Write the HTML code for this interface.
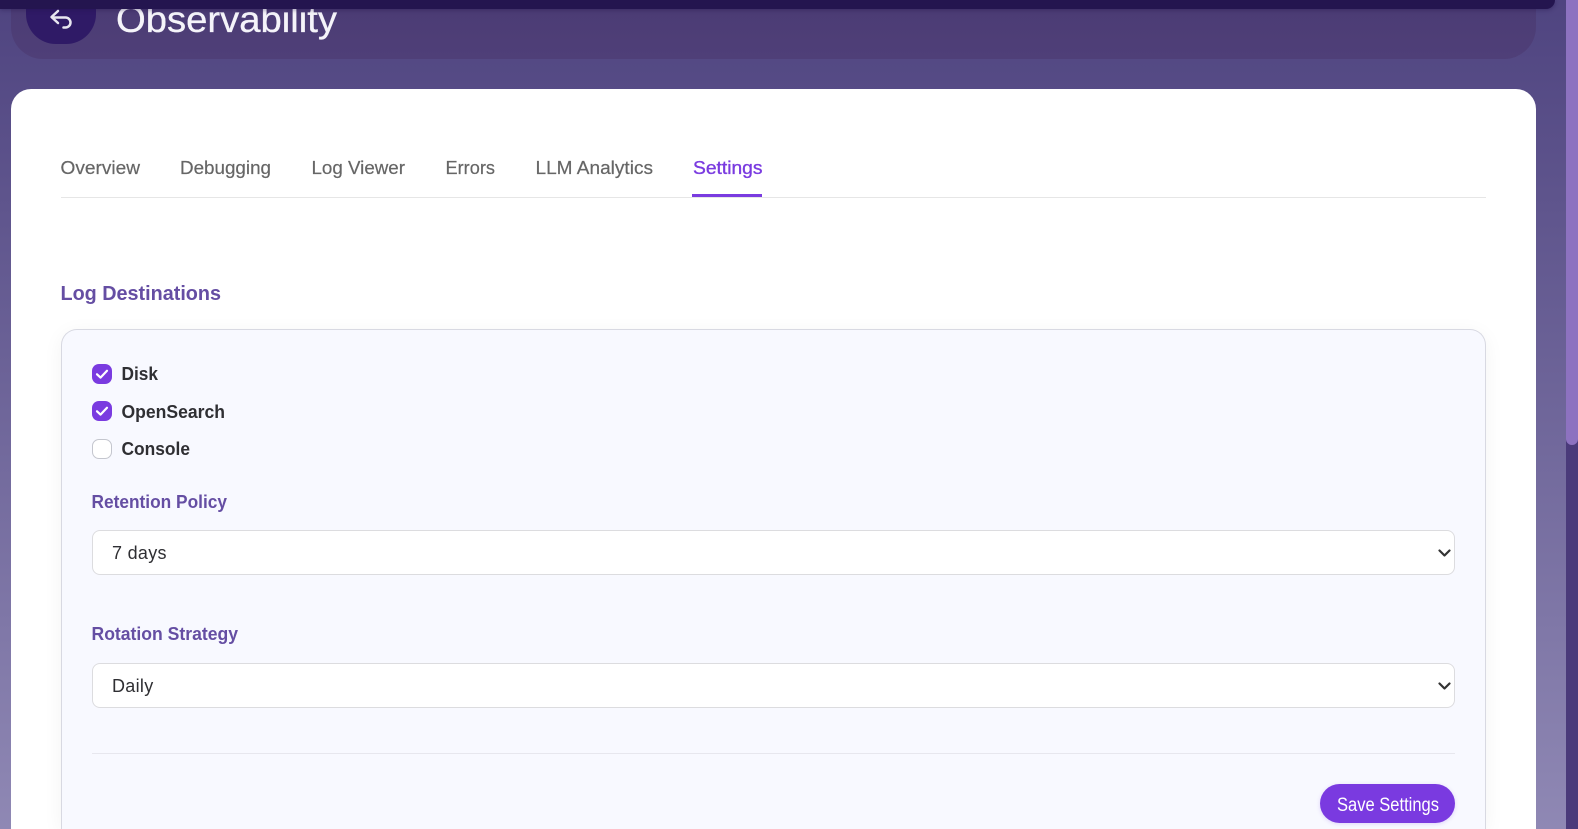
<!DOCTYPE html>
<html lang="en">
<head>
<meta charset="utf-8">
<title>Observability</title>
<style>
html,body{margin:0;padding:0;width:1578px;height:829px;overflow:hidden}
body{font-family:"Liberation Sans",sans-serif}
#page{position:absolute;left:0;top:0;width:1578px;height:829px;overflow:hidden;background:linear-gradient(180deg,#4f4480 0,#8f88b4 829px)}
#page div,#page select,#page svg{position:absolute;box-sizing:border-box}
#top{left:0;top:0;width:1555px;height:9px;background:#24154f;border-radius:0 0 10px 0;box-shadow:0 1px 4px rgba(30,15,70,.4);z-index:3}
#hdr{left:11px;top:-60px;width:1525px;height:119px;border-radius:0 0 32px 32px;background:linear-gradient(180deg,#473870,#4f3f78)}
#back{left:26px;top:-30px;width:70px;height:74px;border-radius:0 0 30px 30px;background:#2f1a66}
#main{left:11px;top:89px;width:1525px;height:740px;background:#fff;border-radius:20px 20px 0 0}
#rule{left:61px;top:197px;width:1425px;height:1px;background:#e6e6e6}
#ul{left:692px;top:194px;width:70px;height:3px;background:#7a3be0}
#card{left:61px;top:329px;width:1425px;height:500px;background:#f8f9ff;border:1px solid #d8d9e2;border-bottom:0;border-radius:16px 16px 0 0;box-shadow:0 4px 20px rgba(0,0,0,.05)}
.cb{left:92px;width:20px;height:20px;border-radius:7px;background:#7a3be0}
.cb.off{background:#fff;border:1px solid #c4c6ce}
select{appearance:none;-webkit-appearance:none;left:92px;width:1363px;height:45px;background:#fff;border:1px solid #dcdcdf;border-radius:8px;padding:0 19px;font:18px "Liberation Sans",sans-serif;color:#2f2f33;letter-spacing:.3px;outline:none}
#div{left:92px;top:753px;width:1363px;height:1px;background:#e7e7ee}
#btn{left:1320px;top:784px;width:135px;height:39px;border-radius:20px;background:#7a3ae0;box-shadow:0 1px 4px rgba(122,58,224,.2)}
#track{left:1566px;top:0;width:12px;height:829px;background:#4a3a7a}
#thumb{left:1566px;top:0;width:12px;height:445px;background:#8d72c0;border-radius:0 0 6px 6px}
#t{left:0;top:0;z-index:4}
#h{left:0;top:0;z-index:1}
#top{z-index:3}
</style>
</head>
<body>
<div id="page">
<div id="hdr"></div>
<div id="back"></div>
<div id="main"></div>
<div id="rule"></div>
<div id="ul"></div>
<div id="card"></div>
<div class="cb" style="top:364px"><svg style="left:0;top:0" width="20" height="20" viewBox="0 0 20 20"><path d="M5 10.300l3.500 3.300 6.500-6.800" fill="none" stroke="#fff" stroke-width="2.200" stroke-linecap="round" stroke-linejoin="round"/></svg></div>
<div class="cb" style="top:401px"><svg style="left:0;top:0" width="20" height="20" viewBox="0 0 20 20"><path d="M5 10.300l3.500 3.300 6.500-6.800" fill="none" stroke="#fff" stroke-width="2.200" stroke-linecap="round" stroke-linejoin="round"/></svg></div>
<div class="cb off" style="top:439px"></div>
<select style="top:530px"><option>7 days</option></select>
<select style="top:663px"><option>Daily</option></select>
<div id="div"></div>
<div id="btn"></div>
<div id="track"></div>
<div id="thumb"></div>
<svg id="h" width="400" height="60" viewBox="0 0 400 60" font-family="'Liberation Sans',sans-serif">
<text x="116" y="32" font-size="37" fill="#f5f4fa" stroke="#f5f4fa" stroke-width=".3" textLength="221" lengthAdjust="spacingAndGlyphs">Observability</text>
</svg>
<div id="top"></div>
<svg id="t" width="1578" height="829" viewBox="0 0 1578 829" font-family="'Liberation Sans',sans-serif">
<path d="M58 11L51.500 17L58 23M52 17.500H65.500a5 5 0 0 1 0 10H63.500" fill="none" stroke="#e8e6f0" stroke-width="2.500" stroke-linecap="round" stroke-linejoin="round"/>
<path d="M1439.500 550.500l5 5 5-5M1439.500 683.500l5 5 5-5" fill="none" stroke="#333" stroke-width="2.200" stroke-linecap="round" stroke-linejoin="round"/>
<g font-size="18.500" fill="#666" stroke="#666" stroke-width=".2">
<text x="60.500" y="174" textLength="79.500" lengthAdjust="spacingAndGlyphs">Overview</text>
<text x="180" y="174" textLength="91" lengthAdjust="spacingAndGlyphs">Debugging</text>
<text x="311.500" y="174" textLength="93.500" lengthAdjust="spacingAndGlyphs">Log Viewer</text>
<text x="445.500" y="174" textLength="49.500" lengthAdjust="spacingAndGlyphs">Errors</text>
<text x="535.500" y="174" textLength="117.500" lengthAdjust="spacingAndGlyphs">LLM Analytics</text>
<text x="693" y="174" textLength="69.500" lengthAdjust="spacingAndGlyphs" fill="#7a3be0" stroke="#7a3be0" stroke-width=".35">Settings</text>
</g>
<text x="60.500" y="300" font-size="20.500" font-weight="700" fill="#654ea3" textLength="160.500" lengthAdjust="spacingAndGlyphs">Log Destinations</text>
<g font-size="18.500" font-weight="700" fill="#2f2f33">
<text x="121.500" y="380" textLength="36.500" lengthAdjust="spacingAndGlyphs">Disk</text>
<text x="121.500" y="418" textLength="103.500" lengthAdjust="spacingAndGlyphs">OpenSearch</text>
<text x="121.500" y="455" textLength="68.500" lengthAdjust="spacingAndGlyphs">Console</text>
</g>
<g font-size="18" font-weight="700" fill="#654ea3">
<text x="91.500" y="508" textLength="135.500" lengthAdjust="spacingAndGlyphs">Retention Policy</text>
<text x="91.500" y="640" textLength="146.500" lengthAdjust="spacingAndGlyphs">Rotation Strategy</text>
</g>
<text x="1337" y="811" font-size="19" fill="#fff" textLength="102" lengthAdjust="spacingAndGlyphs">Save Settings</text>
</svg>
</div>
</body>
</html>
